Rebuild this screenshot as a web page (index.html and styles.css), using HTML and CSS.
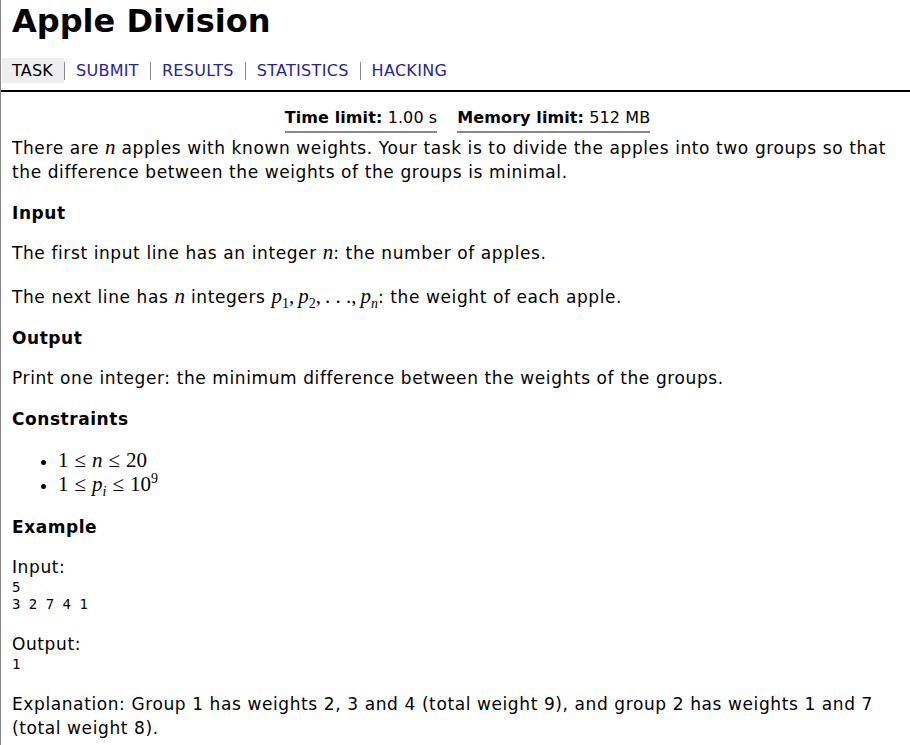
FILE: index.html
```html
<!DOCTYPE html>
<html>
<head>
<meta charset="utf-8">
<link rel="stylesheet" href="styles.css">
</head>
<body>
<div class="page">
  <div class="title-block">
    <h1 class="title">Apple Division</h1>
    <nav class="nav">
      <a class="nav-link current">TASK</a><span class="sep"></span>
      <a class="nav-link">SUBMIT</a><span class="sep"></span>
      <a class="nav-link">RESULTS</a><span class="sep"></span>
      <a class="nav-link">STATISTICS</a><span class="sep"></span>
      <a class="nav-link">HACKING</a>
    </nav>
  </div>
  <div class="content">
    <div class="limits">
      <span class="limit"><b>Time limit:</b> 1.00 s</span>
      <span class="limit"><b>Memory limit:</b> 512 MB</span>
    </div>
    <p class="para first">There are <span class="m">n</span> apples with known weights. Your task is to divide the apples into two groups so that the difference between the weights of the groups is minimal.</p>
    <h3 class="head">Input</h3>
    <p class="para">The first input line has an integer <span class="m">n</span>: the number of apples.</p>
    <p class="para">The next line has <span class="m">n</span> integers <span class="m">p<sub class="ms">1</sub></span><span class="mr comma">,</span><span class="m">p<sub class="ms">2</sub></span><span class="mr comma">,</span><span class="mr">. . .</span><span class="mr comma">,</span><span class="m">p<sub class="ms mi">n</sub></span>: the weight of each apple.</p>
    <h3 class="head">Output</h3>
    <p class="para">Print one integer: the minimum difference between the weights of the groups.</p>
    <h3 class="head">Constraints</h3>
    <ul class="list">
      <li><span class="mr">1</span><span class="mr rel">≤</span><span class="m">n</span><span class="mr rel">≤</span><span class="mr">20</span></li>
      <li><span class="mr">1</span><span class="mr rel">≤</span><span class="m">p<sub class="ms mi">i</sub></span><span class="mr rel">≤</span><span class="mr">10<sup class="ms">9</sup></span></li>
    </ul>
    <h3 class="head">Example</h3>
    <p class="label">Input:</p>
    <pre class="code">5
3 2 7 4 1</pre>
    <p class="label">Output:</p>
    <pre class="code">1</pre>
    <p class="para">Explanation: Group 1 has weights 2, 3 and 4 (total weight 9), and group 2 has weights 1 and 7 (total weight 8).</p>
  </div>
</div>
</body>
</html>
```

FILE: styles.css
```css
html, body {
  margin: 0;
  padding: 0;
  background: #fff;
}
body {
  font-family: "DejaVu Sans", Verdana, sans-serif;
  font-size: 16px;
  color: #000;
}
.page {
  border-left: 1px solid #888;
  min-height: 745px;
}
.title-block {
  border-bottom: 2px solid #000;
  padding-bottom: 7px;
}
.title {
  margin: 0;
  padding: 1px 0 0 11px;
  font-size: 32px;
  line-height: 40px;
  font-weight: bold;
}
.nav {
  display: flex;
  align-items: center;
  margin-top: 17px;
  padding-left: 1px;
  height: 25px;
}
.nav-link {
  display: block;
  padding: 0 11px 0 10px;
  line-height: 25px;
  letter-spacing: 0.3px;
  color: #2222aa;
}
.nav-link.current {
  background: #eee;
  color: #000;
  letter-spacing: 0.2px;
}
.sep {
  width: 1px;
  height: 18px;
  background: #888;
  margin-right: 1px;
}
.content {
  padding: 0 11px;
  font-size: 17px;
  letter-spacing: 0.6px;
}
.limits {
  display: flex;
  justify-content: center;
  gap: 20px;
  padding-left: 24px;
  margin-top: 14px;
  font-size: 16px;
  letter-spacing: 0.1px;
}
.limit {
  line-height: 24px;
  border-bottom: 2px solid #888;
  padding-bottom: 1px;
}
.para {
  margin: 0 0 20px;
  line-height: 24px;
}
.para.first {
  margin-top: 3px;
}
.head {
  margin: -3px 0 16px;
  font-size: 17px;
  line-height: 24px;
  letter-spacing: 0.55px;
}
.m {
  font-family: "Liberation Serif", "DejaVu Serif", serif;
  font-style: italic;
  font-size: 21px;
  line-height: 16px;
  letter-spacing: 0;
}
.mr {
  font-family: "Liberation Serif", "DejaVu Serif", serif;
  font-size: 21px;
  line-height: 16px;
  letter-spacing: 0;
}
.rel {
  margin: 0 6px;
}
.comma {
  margin-right: 4px;
}
.ms {
  font-family: "Liberation Serif", "DejaVu Serif", serif;
  font-size: 14px;
  font-style: normal;
  line-height: 0;
}
.ms.mi {
  font-style: italic;
}
.list {
  margin: 18px 0 21px;
  padding-left: 46px;
  line-height: 24px;
}
.label {
  margin: 0;
  line-height: 24px;
}
.code {
  margin: 0 0 19px;
  font-family: "DejaVu Sans Mono", monospace;
  font-size: 14px;
  line-height: 17px;
  letter-spacing: 0;
}
```
